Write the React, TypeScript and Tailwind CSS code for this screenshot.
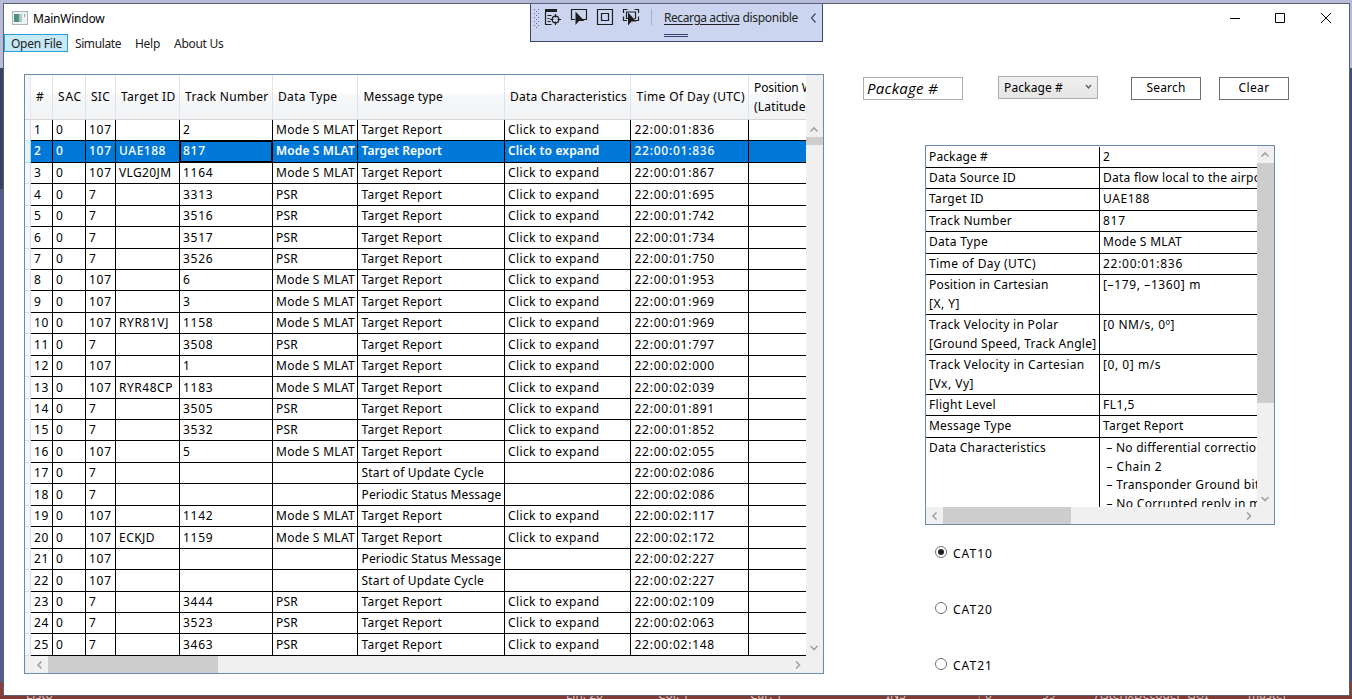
import React, { useLayoutEffect, useRef } from 'react';

/** Text whose tracking is adjusted so that it fills `w` pixels. */
function Label({ w, children, className = '' }: { w?: number; children: string; className?: string }) {
  const ref = useRef<HTMLSpanElement>(null);
  useLayoutEffect(() => {
    const el = ref.current;
    if (!el || !w) return;
    el.style.letterSpacing = '0px';
    const natural = el.getBoundingClientRect().width;
    el.style.letterSpacing = `${(w - natural) / children.length}px`;
  }, [w, children]);
  return (
    <span ref={ref} className={`inline-block whitespace-pre ${className}`}>
      {children}
    </span>
  );
}

const textWidths: Record<string, number> = {
  'Mode S MLAT': 79,
  PSR: 22,
  'Target Report': 80.5,
  'Start of Update Cycle': 122.5,
  'Periodic Status Message': 140,
  'Click to expand': 91.5,
  UAE188: 47,
  VLG20JM: 52.5,
  RYR81VJ: 50,
  RYR48CP: 54,
  ECKJD: 36,
};

function widthOf(text: string): number {
  if (textWidths[text]) return textWidths[text];
  if (text.includes(':')) return 80.5;
  return text.length * 7.6;
}

const columns = [
  { title: '#', cls: 'w-[22px]', head: 'pl-[5px]', cell: 'pl-[3px]', w: 8 },
  { title: 'SAC', cls: 'w-[33px]', head: 'pl-[5px]', cell: 'pl-[3px]', w: 24 },
  { title: 'SIC', cls: 'w-[30px]', head: 'pl-[5px]', cell: 'pl-[3px]', w: 19 },
  { title: 'Target ID', cls: 'w-[64px]', head: 'pl-[5px]', cell: 'pl-[3px]', w: 54.5 },
  { title: 'Track Number', cls: 'w-[93px]', head: 'pl-[5px]', cell: 'pl-[3px]', w: 83.5 },
  { title: 'Data Type', cls: 'w-[85px]', head: 'pl-[5px]', cell: 'pl-[3px]', w: 59.5 },
  { title: 'Message type', cls: 'w-[147px]', head: 'pl-[5.5px]', cell: 'pl-[3.5px]', w: 79.5 },
  { title: 'Data Characteristics', cls: 'w-[126px]', head: 'pl-[5px]', cell: 'pl-[3px]', w: 117 },
  { title: 'Time Of Day (UTC)', cls: 'w-[118px]', head: 'pl-[5.5px]', cell: 'pl-[3.5px]', w: 108.5 },
];

const M = 'Mode S MLAT';
const T = 'Target Report';
const C = 'Click to expand';
const S = 'Start of Update Cycle';
const P = 'Periodic Status Message';

const rows: string[][] = [
  ['107', '', '2', M, T, C, '22:00:01:836'],
  ['107', 'UAE188', '817', M, T, C, '22:00:01:836'],
  ['107', 'VLG20JM', '1164', M, T, C, '22:00:01:867'],
  ['7', '', '3313', 'PSR', T, C, '22:00:01:695'],
  ['7', '', '3516', 'PSR', T, C, '22:00:01:742'],
  ['7', '', '3517', 'PSR', T, C, '22:00:01:734'],
  ['7', '', '3526', 'PSR', T, C, '22:00:01:750'],
  ['107', '', '6', M, T, C, '22:00:01:953'],
  ['107', '', '3', M, T, C, '22:00:01:969'],
  ['107', 'RYR81VJ', '1158', M, T, C, '22:00:01:969'],
  ['7', '', '3508', 'PSR', T, C, '22:00:01:797'],
  ['107', '', '1', M, T, C, '22:00:02:000'],
  ['107', 'RYR48CP', '1183', M, T, C, '22:00:02:039'],
  ['7', '', '3505', 'PSR', T, C, '22:00:01:891'],
  ['7', '', '3532', 'PSR', T, C, '22:00:01:852'],
  ['107', '', '5', M, T, C, '22:00:02:055'],
  ['7', '', '', '', S, '', '22:00:02:086'],
  ['7', '', '', '', P, '', '22:00:02:086'],
  ['107', '', '1142', M, T, C, '22:00:02:117'],
  ['107', 'ECKJD', '1159', M, T, C, '22:00:02:172'],
  ['107', '', '', '', P, '', '22:00:02:227'],
  ['107', '', '', '', S, '', '22:00:02:227'],
  ['7', '', '3444', 'PSR', T, C, '22:00:02:109'],
  ['7', '', '3523', 'PSR', T, C, '22:00:02:063'],
  ['7', '', '3463', 'PSR', T, C, '22:00:02:148'],
];

/** Rows are 21.43px high, snapped to whole pixels. */
const edge = (n: number) => (n === 0 ? 119 : Math.floor(119.5 + 21.4333 * n));

type Line = [string, number];
const details: { h: string; label: Line[]; value: Line[] }[] = [
  { h: 'h-[22px] pt-px', label: [['Package #', 59]], value: [['2', 7.6]] },
  { h: 'h-[21px]', label: [['Data Source ID', 87]], value: [['Data flow local to the airport', 168]] },
  { h: 'h-[22px]', label: [['Target ID', 55]], value: [['UAE188', 47]] },
  { h: 'h-[21px]', label: [['Track Number', 83]], value: [['817', 22.8]] },
  { h: 'h-[22px]', label: [['Data Type', 59]], value: [['Mode S MLAT', 79]] },
  { h: 'h-[21px]', label: [['Time of Day (UTC)', 107]], value: [['22:00:01:836', 80]] },
  { h: 'h-[40px]', label: [['Position in Cartesian', 119.5], ['[X, Y]', 31]], value: [['[–179, –1360] m', 98]] },
  { h: 'h-[40px]', label: [['Track Velocity in Polar', 129.5], ['[Ground Speed, Track Angle]', 167.5]], value: [['[0 NM/s, 0º]', 72]] },
  { h: 'h-[40px]', label: [['Track Velocity in Cartesian', 155.5], ['[Vx, Vy]', 45]], value: [['[0, 0] m/s', 58]] },
  { h: 'h-[21px]', label: [['Flight Level', 67]], value: [['FL1,5', 32]] },
  { h: 'h-[22px]', label: [['Message Type', 82.5]], value: [['Target Report', 80.5]] },
  {
    h: 'h-[90px]',
    label: [['Data Characteristics', 117]],
    value: [
      [' – No differential correction', 161],
      [' – Chain 2', 59],
      [' – Transponder Ground bit set', 178],
      [' – No Corrupted reply in multi', 177],
    ],
  },
];

function Chevron({ dir, className = '' }: { dir: 'up' | 'down' | 'left' | 'right'; className?: string }) {
  const d = {
    up: 'M4.5 10.5 8 7l3.5 3.5',
    down: 'M4.5 6 8 9.5 11.5 6',
    left: 'M10.5 4.5 7 8l3.5 3.5',
    right: 'M6 4.5 9.5 8 6 11.5',
  }[dir];
  return (
    <svg viewBox="0 0 16 16" className={`size-4 shrink-0 ${className}`} fill="none" stroke="#a2a2a2" strokeWidth="1.6">
      <path d={d} />
    </svg>
  );
}

function DataTable() {
  return (
    <section className="flex h-[600px] w-[800px] shrink-0 flex-col border border-[#688caf] bg-[#f0f0f0]">
      <div className="flex h-[581px]">
        <div className="flex w-[781px] shrink-0 flex-col overflow-hidden bg-white">
          <div className="flex h-[45px] shrink-0 border-b border-[#d5d5d5] bg-linear-to-b from-white from-40% via-[#f7f8fa] via-45% to-[#f1f2f4]">
            <div className="w-[6px] shrink-0 border-r border-[#e3e8ee] bg-[#f3f5f7]" />
            {columns.map((c) => (
              <div key={c.title} className={`flex shrink-0 items-center border-r border-[#dfe2e6] ${c.cls} ${c.head}`}>
                <Label w={c.w}>{c.title}</Label>
              </div>
            ))}
            <div className="flex shrink-0 flex-col items-start justify-center pl-[5px] leading-[19px]">
              <Label w={91}>Position WGS-84</Label>
              <Label w={55}>(Latitude,</Label>
            </div>
          </div>
          {rows.map((r, i) => {
            const selected = i === 1;
            const cells = [String(i + 1), '0', ...r];
            return (
              <div key={i} className="flex shrink-0" style={{ height: edge(i + 1) - edge(i) }}>
                <div
                  className={`w-[6px] shrink-0 border-r border-b ${
                    selected ? 'border-[#a5d8f2] bg-[#e3f4fc]' : 'border-[#d3dfeb] bg-[#f6f9fd]'
                  }`}
                />
                <div className={`flex flex-1 border-b border-black ${selected ? 'bg-[#0078d7] text-white' : ''}`}>
                  {cells.map((v, k) => (
                    <div
                      key={k}
                      className={`flex shrink-0 items-center border-r border-black ${columns[k].cls} ${columns[k].cell} ${
                        selected && k === 4 ? 'shadow-[inset_1px_1px_0_#000,inset_-1px_-1px_0_#000]' : ''
                      }`}
                    >
                      {v && (
                        <Label
                          w={widthOf(v)}
                          className={selected ? (k >= 5 && k <= 7 ? '-mt-px font-semibold' : '-mt-px font-medium') : ''}
                        >
                          {v}
                        </Label>
                      )}
                    </div>
                  ))}
                </div>
              </div>
            );
          })}
        </div>
        <div className="flex w-[17px] flex-col pt-[46px]">
          <Chevron dir="up" />
          <div className="h-2 bg-[#cdcdcd]" />
          <Chevron dir="down" className="mt-auto" />
        </div>
      </div>
      <div className="flex h-[17px] items-center pr-[17px] pl-[6px]">
        <Chevron dir="left" className="mr-px" />
        <div className="h-full w-[170px] bg-[#cdcdcd]" />
        <Chevron dir="right" className="ml-auto" />
      </div>
    </section>
  );
}

function DetailPanel() {
  return (
    <section className="mt-[45px] ml-[62px] flex h-[380px] w-[350px] flex-col border border-[#688caf] bg-[#f0f0f0]">
      <div className="flex h-[361px]">
        <div className="w-[331px] shrink-0 overflow-hidden bg-white">
          {details.map((d) => (
            <div key={d.label[0][0]} className={`flex w-[400px] border-b border-black leading-[18.6px] ${d.h}`}>
              <div className="flex w-[174px] shrink-0 flex-col items-start border-r border-black pt-[1px] pl-[3px]">
                {d.label.map(([t, w]) => (
                  <Label key={t} w={w}>{t}</Label>
                ))}
              </div>
              <div className="flex flex-col items-start pt-[1px] pl-[3px]">
                {d.value.map(([t, w]) => (
                  <Label key={t} w={w}>{t}</Label>
                ))}
              </div>
            </div>
          ))}
        </div>
        <div className="flex w-[17px] flex-col">
          <Chevron dir="up" className="mb-px" />
          <div className="h-60 bg-[#cdcdcd]" />
          <Chevron dir="down" className="mt-auto" />
        </div>
      </div>
      <div className="flex h-[17px] items-center pr-[17px]">
        <Chevron dir="left" className="mr-px" />
        <div className="h-full w-32 bg-[#cdcdcd]" />
        <Chevron dir="right" className="ml-auto" />
      </div>
    </section>
  );
}

function Radio({ label, checked }: { label: string; checked?: boolean }) {
  return (
    <div className="flex h-5 items-center gap-[6px]">
      <span className="-mt-[2px] flex size-3 items-center justify-center rounded-full border border-[#707070] bg-white">
        {checked && <span className="size-[6px] rounded-full bg-[#212121]" />}
      </span>
      <Label w={40} className="mt-[2px]">{label}</Label>
    </div>
  );
}

function DebugToolbar() {
  return (
    <div className="absolute top-0 left-[526px] flex h-[38px] w-[293px] border border-t-0 border-[#3b4772] bg-[#ccd5f0]">
      <svg width="290" height="37" viewBox="531 4 290 37" fill="none" stroke="#1e1e1e" strokeWidth="1.2" className="shrink-0">
        <g fill="#5f6b95" stroke="none">
          {[0, 1, 2, 3, 4].map((i) => (
            <React.Fragment key={i}>
              <rect x="534" y={9 + i * 4} width="1" height="1" />
              <rect x="538" y={9 + i * 4} width="1" height="1" />
              <rect x="536" y={11 + i * 4} width="1" height="1" />
            </React.Fragment>
          ))}
        </g>
        <path d="M545 9h12v3h-12z" fill="#1e1e1e" stroke="none" />
        <path d="M545.5 12v12.500h6M547.5 15.500h4M547.5 18.500h2M547.5 21.500h3" />
        <circle cx="555.5" cy="19.5" r="3.3" />
        <path d="M555.5 14v3.500M555.5 21.500v3.500M550 19.500h3.500M557.5 19.500h3.500" />
        <path d="M575 19.500h-3.500v-10h15v10h-4" />
        <path d="M575.5 11.500v13.500l3.500-4h5.500z" fill="#1e1e1e" stroke="none" />
        <path d="M597.5 9.500h15v15h-15zM601.5 13.500h7v7h-7z" />
        <path d="M623.5 13V9.500h4M634.5 9.500h4V13M623.5 16.500v4h3.500M638.5 16.500v4h-3.500M628 18.500h-1.500v-6.500h9v6.500h-1" />
        <path d="M628 12.500v13l3.500-4h5z" fill="#1e1e1e" stroke="none" />
        <path d="M651.5 9v16" stroke="#a5afd0" strokeWidth="1" />
        <path d="M815.5 13.500 811.5 18l4 4.500" stroke="#3b4772" />
        <path d="M664 34.500h24M664 36.500h24" stroke="#3b4772" strokeWidth="1" />
      </svg>
      <div className="absolute top-[5px] left-[133px] flex gap-[3px] leading-[18px] text-[#1e1e1e]">
        <Label w={75.5} className="underline underline-offset-2">Recarga activa</Label>
        <Label w={55.5}>disponible</Label>
      </div>
    </div>
  );
}

function TitleBar() {
  return (
    <header className="flex h-[30px] items-center">
      <svg width="16" height="15" viewBox="0 0 16 15" className="mb-[2px] ml-2">
        <rect x=".5" y=".5" width="15" height="13" fill="#eef2f3" stroke="#a9b3b8" />
        <rect x="2" y="3" width="5" height="8" fill="#4f9080" />
        <rect x="7" y="3" width="3" height="8" fill="#a9c9c2" />
        <path d="M12.5 3v3" stroke="#9aa8ae" />
      </svg>
      <Label w={71.5} className="ml-[5px]">MainWindow</Label>
      <svg width="102" height="12" viewBox="0 0 102 12" fill="none" stroke="#000" className="mr-[17px] mb-[2px] ml-auto">
        <path d="M0 6.500h10" />
        <path d="M45.5 1.500h9v9h-9z" />
        <path d="m91 1 10 10M101 1 91 11" />
      </svg>
    </header>
  );
}

const status: [string, string][] = [
  ['Listo', 'w-[540px]'],
  ['Lín: 20', 'w-[92px]'],
  ['Col: 1', 'w-[92px]'],
  ['Car: 1', 'w-[136px]'],
  ['INS', 'w-[90px]'],
  ['↑ 0', 'w-[66px]'],
  ['99', 'w-[53px]'],
  ['AsterixDecoder_GUI', 'w-[153px]'],
  ['master', 'w-[80px]'],
];

export default function App() {
  return (
    <div className="flex h-[699px] w-[1352px] flex-col overflow-hidden bg-[#b5bbd9] font-['Noto_Sans',sans-serif] text-[12px] leading-[18px] text-black">
      <div className="h-[3px] shrink-0" />
      <div className="flex h-[693px] shrink-0">
        <div className="flex w-[3px] shrink-0 flex-col">
          <div className="h-[65px]" />
          <div className="h-[121px] bg-[#394264]" />
          <div className="flex-1 bg-[#525d88]" />
          <div className="h-[14px] bg-[#8a3f37]" />
        </div>
        <div className="relative flex w-[1347px] shrink-0 flex-col border border-[#5b6079] bg-white">
          <TitleBar />
          <nav className="flex h-[18px] items-center text-[#212121]">
            <div className="flex h-[18px] w-[64px] items-center border border-[#26a0da] bg-[#c5e9f7] pl-[6px]">
              <Label w={51} className="mt-[2px]">Open File</Label>
            </div>
            <Label w={46} className="mt-[2px] ml-[7px]">Simulate</Label>
            <Label w={25} className="mt-[2px] ml-[14px]">Help</Label>
            <Label w={49.5} className="mt-[2px] ml-[14px]">About Us</Label>
          </nav>
          <main className="mt-[22px] ml-5 flex">
            <DataTable />
            <div className="ml-[39px] flex flex-col pt-[2px]">
              <div className="flex h-6 items-start">
                <div className="mt-px flex h-[23px] w-[100px] items-center border border-[#abadb3] pl-[3px] font-['Open_Sans',sans-serif] text-[15px] italic">
                  <Label w={71} className="-mt-px">Package #</Label>
                </div>
                <div className="ml-[35px] flex h-[23px] w-[100px] items-center justify-between border border-[#acacac] bg-linear-to-b from-[#f0f0f0] to-[#e5e5e5] pr-[5px] pl-[5px]">
                  <Label w={59}>Package #</Label>
                  <svg width="7" height="6" viewBox="0 0 7 6" fill="none" stroke="#606060" strokeWidth="1.4" className="mb-[2px]">
                    <path d="M1 1l2.500 3L6 1" />
                  </svg>
                </div>
                <div className="mt-px ml-[33px] flex h-[23px] w-[70px] items-center justify-center border border-[#707070]">
                  <Label w={39} className="-mt-px">Search</Label>
                </div>
                <div className="mt-px ml-[18px] flex h-[23px] w-[70px] items-center justify-center border border-[#707070]">
                  <Label w={31} className="-mt-px">Clear</Label>
                </div>
              </div>
              <DetailPanel />
              <div className="mt-[18px] ml-[72px] flex flex-col gap-9">
                <Radio label="CAT10" checked />
                <Radio label="CAT20" />
                <Radio label="CAT21" />
              </div>
            </div>
          </main>
          <DebugToolbar />
        </div>
        <div className="flex w-[2px] shrink-0 flex-col">
          <div className="h-[65px]" />
          <div className="flex-1 bg-[#434e7b]" />
          <div className="h-[14px] bg-[#8a3f37]" />
        </div>
      </div>
      <footer className="flex h-[3px] shrink-0 items-end overflow-hidden bg-[#7f3b34] pl-[26px] leading-[14px] text-[#d9c4c2]">
        {status.map(([t, w]) => (
          <span key={t} className={`-mb-[3px] shrink-0 ${w}`}>{t}</span>
        ))}
      </footer>
    </div>
  );
}
